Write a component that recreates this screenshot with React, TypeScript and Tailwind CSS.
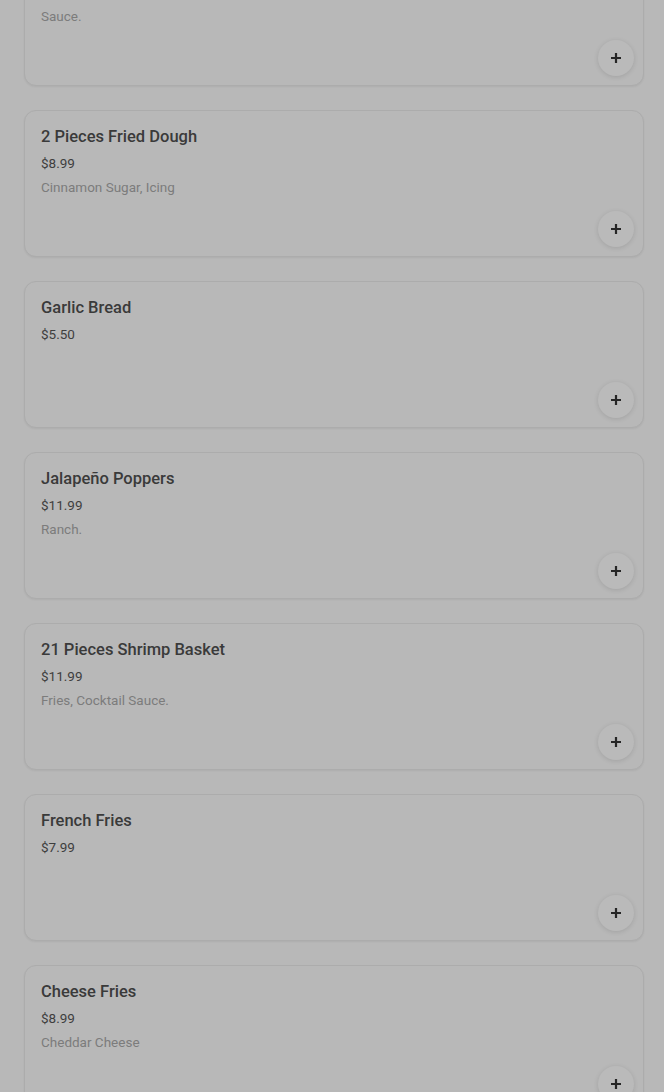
import React from "react";

type Item = { name: string; price: string; desc?: string };

const items: Item[] = [
  { name: "Mozzarella Sticks", price: "$9.99", desc: "Sauce." },
  { name: "2 Pieces Fried Dough", price: "$8.99", desc: "Cinnamon Sugar, Icing" },
  { name: "Garlic Bread", price: "$5.50" },
  { name: "Jalapeño Poppers", price: "$11.99", desc: "Ranch." },
  { name: "21 Pieces Shrimp Basket", price: "$11.99", desc: "Fries, Cocktail Sauce." },
  { name: "French Fries", price: "$7.99" },
  { name: "Cheese Fries", price: "$8.99", desc: "Cheddar Cheese" },
];

function Card({ item }: { item: Item }) {
  return (
    <div className="relative h-[147px] rounded-xl border border-[#acacac] bg-[#b8b8b8] shadow-[0_1px_2px_rgba(0,0,0,0.06)] px-4 pt-4">
      <div className="text-[16.5px] leading-5 font-medium text-[#3a3a3a]">{item.name}</div>
      <div className="mt-1.5 text-[13.5px] leading-5 text-[#3e3e3e]">{item.price}</div>
      {item.desc && <div className="mt-1 text-[13.5px] leading-5 text-[#7c7c7c]">{item.desc}</div>}
      <button className="absolute right-[9px] bottom-[9px] flex h-9 w-9 items-center justify-center rounded-full bg-[#bababa] shadow-[0_1px_5px_rgba(0,0,0,0.12)]">
        <svg width="12" height="12" viewBox="0 0 12 12" fill="none">
          <path d="M6 1v10M1 6h10" stroke="#262626" strokeWidth="2.2" strokeLinecap="butt" />
        </svg>
      </button>
    </div>
  );
}

export default function App() {
  return (
    <div
      className="h-[1092px] overflow-hidden bg-[#b8b8b8]"
      style={{ fontFamily: "Roboto, 'Noto Sans', sans-serif" }}
    >
      <div className="mt-[-61px] flex flex-col gap-6 pl-6 pr-5">
        {items.map((it, i) => (
          <Card key={i} item={it} />
        ))}
      </div>
    </div>
  );
}
